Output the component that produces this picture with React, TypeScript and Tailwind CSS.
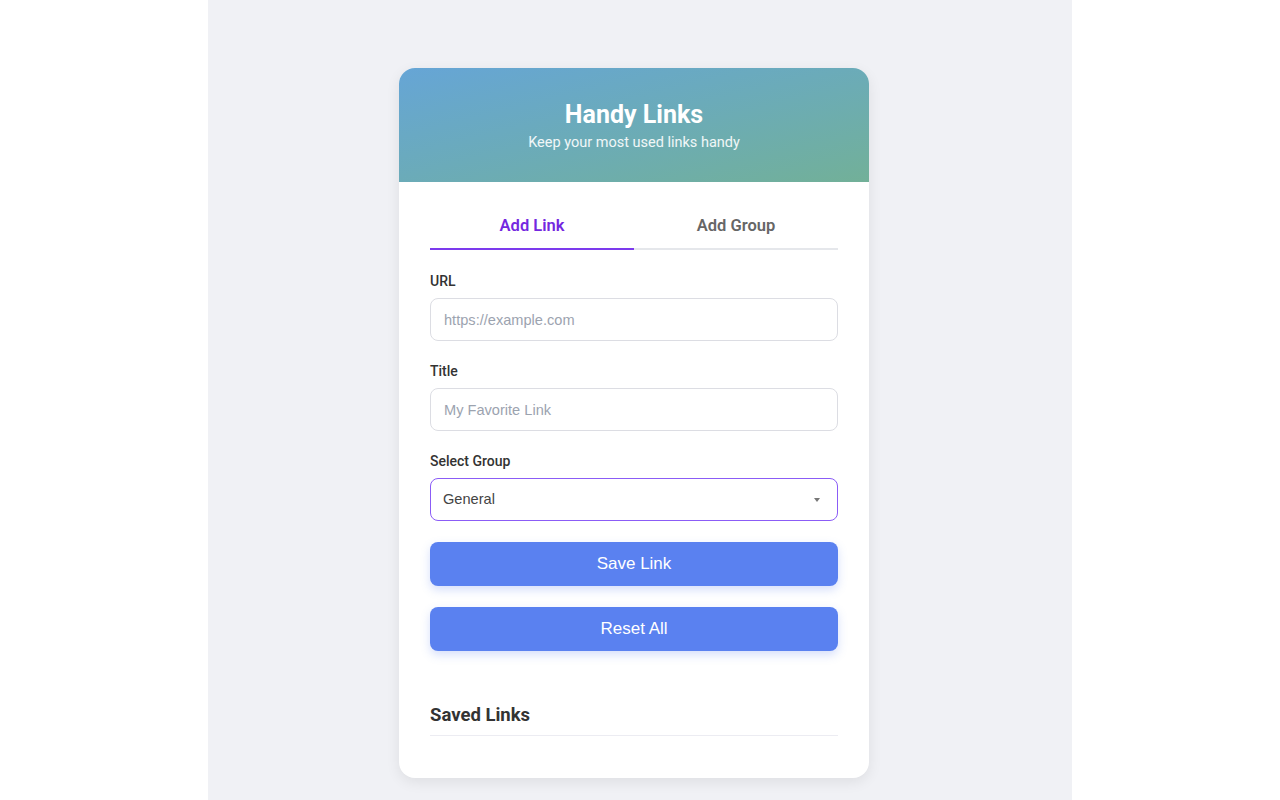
import { useState } from "react";

export default function App() {
  const [tab, setTab] = useState<"link" | "group">("link");
  const [url, setUrl] = useState("");
  const [title, setTitle] = useState("");
  const [group, setGroup] = useState("General");

  return (
    <div className="min-h-screen bg-white flex justify-center">
      <div className="w-[864px] min-h-screen bg-[#f0f1f5] flex justify-center pr-[12px] pt-[68px] pb-[22px]">
        <div className="w-[470px] h-[710px] bg-white rounded-[16px] overflow-hidden shadow-[0_4px_14px_rgba(0,0,0,0.08)] font-['Roboto',sans-serif]">
          <div className="h-[114px] bg-gradient-to-br from-[#66a5d6] to-[#72b098] flex flex-col items-center pt-[31px]">
            <h1 className="text-[25px] leading-[31px] font-bold text-white">Handy Links</h1>
            <p className="text-[14.5px] leading-[18px] mt-[4px] text-white/90">Keep your most used links handy</p>
          </div>

          <div className="px-[31px] pt-[22px]">
            <div className="flex border-b-[2px] border-[#e5e7eb]">
              <button
                onClick={() => setTab("link")}
                className={`flex-1 h-[46px] text-[16.5px] font-semibold -mb-[2px] border-b-[2px] ${
                  tab === "link" ? "text-[#7427e0] border-[#7c3aed]" : "text-[#666] border-transparent"
                }`}
              >
                Add Link
              </button>
              <button
                onClick={() => setTab("group")}
                className={`flex-1 h-[46px] text-[16.5px] font-semibold -mb-[2px] border-b-[2px] ${
                  tab === "group" ? "text-[#7427e0] border-[#7c3aed]" : "text-[#666] border-transparent"
                }`}
              >
                Add Group
              </button>
            </div>

            <div className="mt-[21px]">
              <label className="block text-[14px] leading-[20px] font-medium text-[#333]">URL</label>
              <input
                value={url}
                onChange={(e) => setUrl(e.target.value)}
                placeholder="https://example.com"
                className="mt-[7px] w-full h-[43px] px-[13px] rounded-[8px] border border-[#dcdde3] text-[14.6px] font-['Liberation_Sans',Arial,sans-serif] text-[#444] placeholder:text-[#9ca3af] outline-none"
              />
            </div>

            <div className="mt-[20px]">
              <label className="block text-[14px] leading-[20px] font-medium text-[#333]">Title</label>
              <input
                value={title}
                onChange={(e) => setTitle(e.target.value)}
                placeholder="My Favorite Link"
                className="mt-[7px] w-full h-[43px] px-[13px] rounded-[8px] border border-[#dcdde3] text-[14.6px] font-['Liberation_Sans',Arial,sans-serif] text-[#444] placeholder:text-[#9ca3af] outline-none"
              />
            </div>

            <div className="mt-[20px]">
              <label className="block text-[14px] leading-[20px] font-medium text-[#333]">Select Group</label>
              <div className="relative mt-[7px]">
                <select
                  value={group}
                  onChange={(e) => setGroup(e.target.value)}
                  className="appearance-none w-full h-[43px] px-[12px] rounded-[8px] border border-[#8b5cf6] text-[14.6px] font-['Liberation_Sans',Arial,sans-serif] text-[#444] bg-white outline-none"
                >
                  <option>General</option>
                </select>
                <span className="pointer-events-none absolute right-[18px] top-[20px] w-0 h-0 border-l-[3.5px] border-r-[3.5px] border-t-[4px] border-l-transparent border-r-transparent border-t-[#777]" />
              </div>
            </div>

            <button className="mt-[21px] w-full h-[44px] rounded-[8px] bg-[#5a81f0] text-white text-[17px] font-['Liberation_Sans',Arial,sans-serif] shadow-[0_4px_10px_rgba(90,129,240,0.25)]">
              Save Link
            </button>
            <button className="mt-[21px] w-full h-[44px] rounded-[8px] bg-[#5a81f0] text-white text-[17px] font-['Liberation_Sans',Arial,sans-serif] shadow-[0_4px_10px_rgba(90,129,240,0.25)]">
              Reset All
            </button>

            <div className="mt-[51px]">
              <h2 className="text-[18.5px] leading-[27px] font-bold text-[#333] pb-[6px] border-b border-[#ececf2]">Saved Links</h2>
            </div>
          </div>
        </div>
      </div>
    </div>
  );
}
